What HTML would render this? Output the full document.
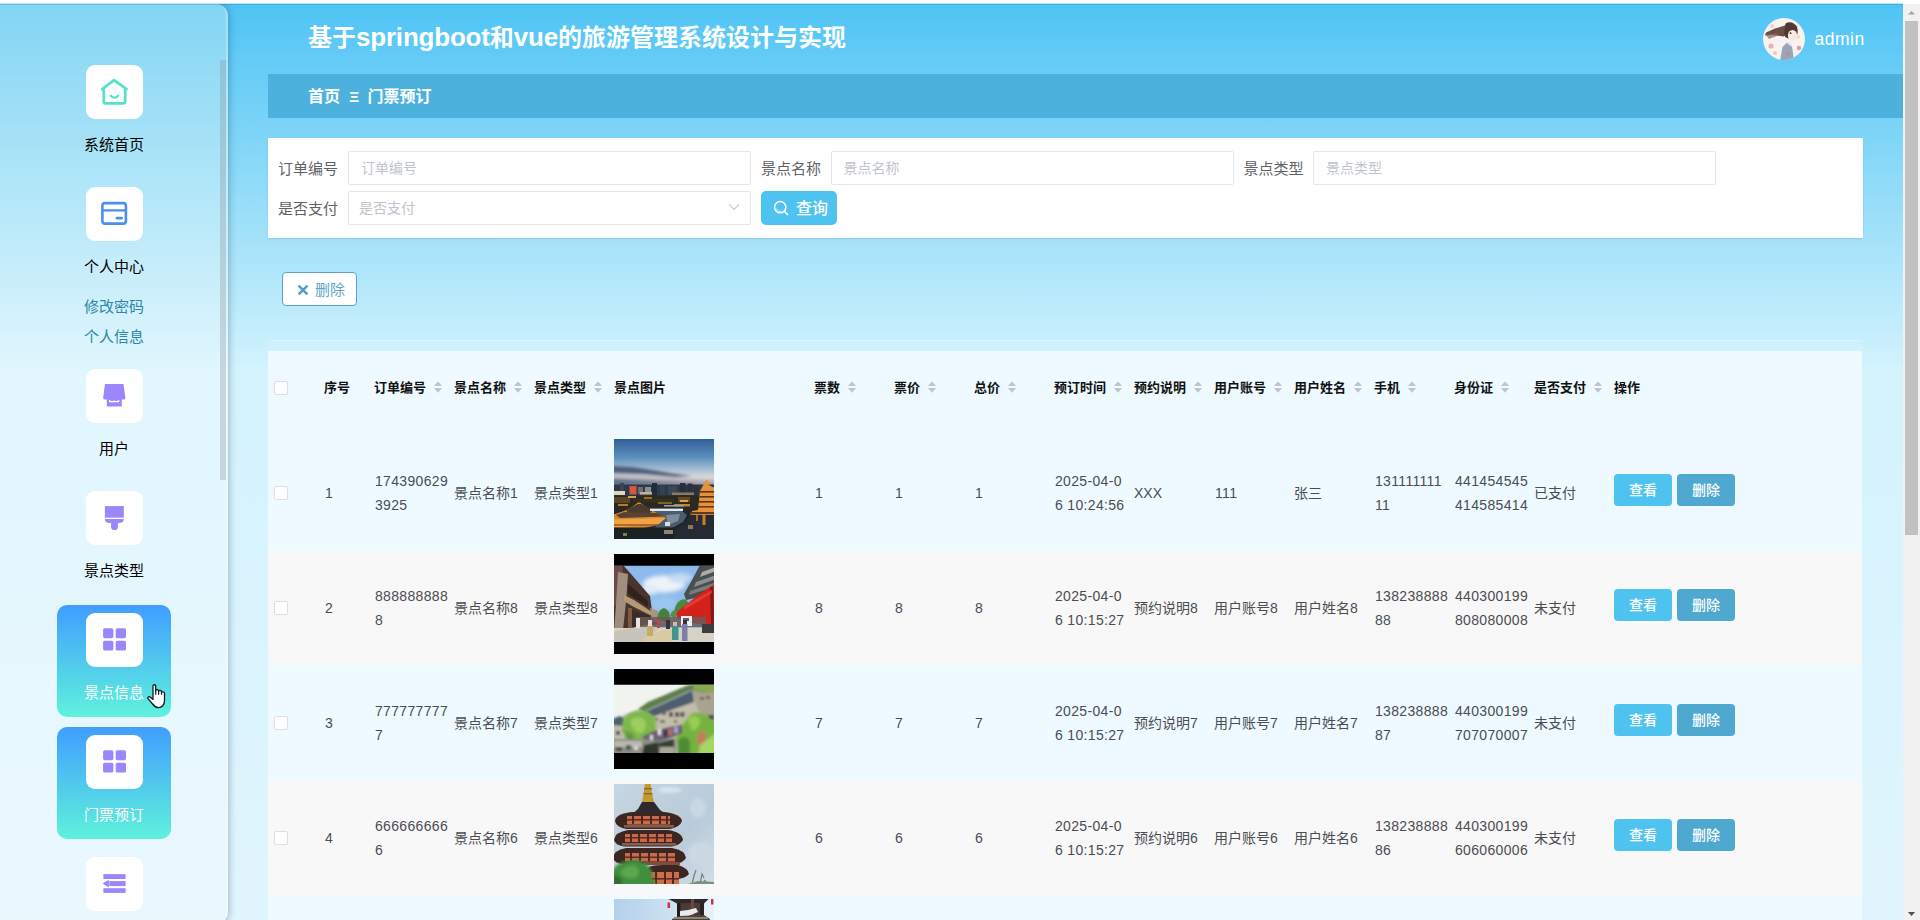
<!DOCTYPE html>
<html lang="zh-CN"><head><meta charset="utf-8"><title>基于springboot和vue的旅游管理系统设计与实现</title>
<style>
*{box-sizing:border-box;margin:0;padding:0}
button{border:0;font:inherit;color:inherit;background:none;cursor:pointer;padding:0;display:block;overflow:visible}
h1{font-size:inherit}
html,body{width:1920px;height:920px;overflow:hidden;background:#fff}
body{position:relative;font-family:"Liberation Sans", "Noto Sans CJK SC", sans-serif;font-size:14px;color:#333}
.abs{position:absolute}
#app{position:absolute;left:0;top:4px;width:1903px;height:920px;overflow:hidden;
 background:linear-gradient(180deg,#4FC4F5 0%,#d4f3fd 40%,#E1F5FE 100%)}
#topl{position:absolute;left:0;top:3px;width:1903px;height:1px;background:rgba(79,195,247,.4)}
#topd{position:absolute;left:0;top:4px;width:1903px;height:1px;background:rgba(30,90,130,.22)}
#side{position:absolute;left:0;top:0;width:228px;height:920px;border-radius:0 12px 12px 0;
 background:linear-gradient(180deg,rgba(250,255,240,.3) 0%,rgba(255,255,255,.3) 40%);box-shadow:0 0 8px rgba(0,30,60,.36);border-right:2px solid rgba(255,255,255,.25)}
#sthumb{position:absolute;left:220px;top:56px;width:6px;height:420px;background:rgba(144,147,153,.32);border-radius:1px}
.mi{position:absolute;left:57px;width:114px;height:112px;border-radius:10px;text-align:center}
.mi.on{background:linear-gradient(180deg,#409EFF 0%,#5ff2dc 100%)}
.mi .ib{position:absolute;left:29px;top:8px;width:56.5px;height:54px;border-radius:9px;background:#fff;overflow:hidden}
.mi .ib svg{position:absolute;left:0;top:0}
.mi .lb{position:absolute;left:0;top:62px;width:114px;height:50px;line-height:52px;font-size:15px;color:#000;white-space:nowrap}
.mi.on .lb{color:#fff}
.sub{position:absolute;left:57px;width:114px;height:30px;line-height:32px;text-align:center;font-size:15px;color:#2d87a8}
#title{position:absolute;left:308px;top:0;height:70px;line-height:66px;font-size:24px;font-weight:bold;color:#fff;white-space:nowrap}
#title .lt{font-size:26px;letter-spacing:-.2px}
#user{position:absolute;left:1814.5px;top:0;height:70px;line-height:71px;font-size:17.5px;letter-spacing:.5px;color:#fff}
#avatar{position:absolute;left:1763px;top:14px;width:42px;height:42px;border-radius:50%;overflow:hidden}
#crumb{position:absolute;left:268px;top:70px;width:1635px;height:44px;background:#4cb2dd}
#crumb span{position:absolute;top:1px;height:44px;line-height:44px;font-size:16px;font-weight:bold;color:#fff;white-space:nowrap}
#search{position:absolute;left:268px;top:134px;width:1595px;height:100px;background:#fff;box-shadow:0 1px 2px rgba(0,60,100,.12)}
.fl{position:absolute;height:34px;line-height:36px;font-size:15px;color:#606266;white-space:nowrap}
.inp{position:absolute;width:403px;height:34px;border:1px solid #e5e6e9;border-radius:1.5px;background:#fff;line-height:32px;font-size:14px;color:#c0c4cc;white-space:nowrap}
.btnq{position:absolute;left:493px;top:53px;width:76px;height:34px;border-radius:5px;background:#4fc3f0;color:#fff;font-size:16px;line-height:36px;font-weight:500;white-space:nowrap}
.btnd{position:absolute;left:282px;top:268px;width:75px;height:34px;border-radius:4px;background:#fff;border:1px solid #5ba3c4;color:#5fa5c6;font-size:15px;line-height:32px;white-space:nowrap}
#tline{position:absolute;left:270px;top:336px;width:1592px;height:1px;background:rgba(255,255,255,.32)}
#tband{position:absolute;left:268px;top:337px;width:1594px;height:10px;background:rgba(255,255,255,.1)}
#tbl{position:absolute;left:268px;top:347px;width:1594px;height:600px}
.tr{position:absolute;left:0;width:1594px}
.th{position:absolute;top:0;height:74px;line-height:74px;font-size:13px;font-weight:bold;color:#111;white-space:nowrap}
.td{position:absolute;font-size:14px;line-height:24px;color:#4b4d52;white-space:nowrap}
.td.n{letter-spacing:.33px;margin-left:1px}
.cb{position:absolute;left:6px;width:14px;height:14px;border:1px solid #dcdfe6;border-radius:2px;background:#fff}
.caret{position:absolute;width:10px;height:14px}
.caret i{position:absolute;left:0;width:0;height:0;border:4.2px solid transparent}
.caret i.u{top:-3.8px;border-bottom-color:#c0c4cc}
.caret i.d{top:7.1px;border-top-color:#c0c4cc}
.ob{position:absolute;width:58px;height:32px;border-radius:4px;color:#fff;font-size:14px;line-height:32px;text-align:center;font-weight:500}
.thumb{position:absolute;left:346px;top:4px;width:100px;height:100px;overflow:hidden}
#sb{position:absolute;left:1903px;top:4px;width:17px;height:916px;background:#f1f1f1}
#sb .t{position:absolute;left:2px;top:17px;width:13px;height:514px;background:#c1c1c1}
</style></head>
<body>
<div id="app">
<aside id="side">
<div id="sthumb"></div>
<nav>
<div class="mi" style="top:53px"><div class="ib"><svg width="57" height="54" viewBox="0 0 57 54" ><path d="M16.1 24.1 L28.1 15.1 L40.5 24.1 M17.7 23.4 V36.2 Q17.7 38.4 19.9 38.4 H37 Q39.2 38.4 39.2 36.2 V23.4" fill="none" stroke="#52e3c8" stroke-width="2.7" stroke-linecap="round" stroke-linejoin="round"/><path d="M24.8 30.7 Q28.45 34.6 32.1 30.7" fill="none" stroke="#52e3c8" stroke-width="2.3" stroke-linecap="round"/></svg></div><div class="lb">系统首页</div></div>
<div class="mi" style="top:175px"><div class="ib"><svg width="57" height="54" viewBox="0 0 57 54" ><rect x="16.4" y="16.1" width="23.5" height="20.5" rx="2.6" fill="none" stroke="#4a90f0" stroke-width="2.6"/><path d="M16.4 23.3 H39.9" stroke="#4a90f0" stroke-width="2.2"/><path d="M30.9 31.1 H35.7" stroke="#4a90f0" stroke-width="2.8" stroke-linecap="round"/></svg></div><div class="lb">个人中心</div></div>
<div class="sub" style="top:287px">修改密码</div>
<div class="sub" style="top:317px">个人信息</div>
<div class="mi" style="top:357px"><div class="ib"><svg width="57" height="54" viewBox="0 0 57 54" ><path d="M18.9 15.1 H37.5 L39.4 29 Q39.4 30.6 37.6 30.6 H35.8 V37.5 H20.8 V30.6 H19 Q17.2 30.6 17.2 29 Z" fill="#9b87fb"/><path d="M23 30.7 Q25.6 32.6 28.2 31.6 Q30.8 32.6 33.4 30.7 L33.2 33.2 H23.2 Z" fill="#fff"/></svg></div><div class="lb">用户</div></div>
<div class="mi" style="top:479px"><div class="ib"><svg width="57" height="54" viewBox="0 0 57 54" ><rect x="18.9" y="15.1" width="18.9" height="11.6" fill="#9b87fb"/><path d="M18.9 28.1 H37.8 Q37.8 31.9 34 31.9 H31.9 V35.7 Q31.9 39.1 28.5 39.1 Q25.1 39.1 25.1 35.7 V31.9 H22.7 Q18.9 31.9 18.9 28.1 Z" fill="#9b87fb"/></svg></div><div class="lb">景点类型</div></div>
<div class="mi on" style="top:601px"><div class="ib"><svg width="57" height="54" viewBox="0 0 57 54" ><rect x="17.1" y="15.3" width="10.3" height="9.9" rx="1.6" fill="#9b87fb"/><rect x="17.1" y="27.7" width="10.3" height="9.9" rx="1.6" fill="#9b87fb"/><rect x="29.7" y="15.3" width="10.3" height="9.9" rx="1.6" fill="#9b87fb"/><rect x="29.7" y="27.7" width="10.3" height="9.9" rx="1.6" fill="#9b87fb"/></svg></div><div class="lb">景点信息</div></div>
<div class="mi on" style="top:723px"><div class="ib"><svg width="57" height="54" viewBox="0 0 57 54" ><rect x="17.1" y="15.3" width="10.3" height="9.9" rx="1.6" fill="#9b87fb"/><rect x="17.1" y="27.7" width="10.3" height="9.9" rx="1.6" fill="#9b87fb"/><rect x="29.7" y="15.3" width="10.3" height="9.9" rx="1.6" fill="#9b87fb"/><rect x="29.7" y="27.7" width="10.3" height="9.9" rx="1.6" fill="#9b87fb"/></svg></div><div class="lb">门票预订</div></div>
<div class="mi" style="top:845px"><div class="ib"><svg width="57" height="54" viewBox="0 0 57 54" ><rect x="17.4" y="17.1" width="22.2" height="4.9" fill="#9b87fb"/><rect x="23.3" y="24.1" width="16.3" height="5" fill="#9b87fb"/><path d="M16.6 26.6 L22.8 22.7 V30.5 Z" fill="#9b87fb"/><rect x="17.4" y="31.2" width="22.2" height="4.7" fill="#9b87fb"/></svg></div><div class="lb">系统管理</div></div>
</nav>
</aside>
<header>
<h1 id="title">基于<span class="lt">springboot</span>和<span class="lt">vue</span>的旅游管理系统设计与实现</h1>
<div id="avatar"><svg width="42" height="42" viewBox="0 0 42 42" ><defs><filter id="bav" x="-10%" y="-10%" width="120%" height="120%"><feGaussianBlur stdDeviation=".6"/></filter></defs><rect width="42" height="42" fill="#f8f2f1"/><g filter="url(#bav)"><circle cx="8" cy="28" r="2.6" fill="#eeb3aa"/><circle cx="12" cy="35" r="2" fill="#f0c4c0"/><circle cx="36" cy="30" r="2.2" fill="#ea9a92"/><circle cx="35" cy="19" r="2" fill="#f3dfb0"/><circle cx="9" cy="8" r="2" fill="#f3d3d0"/><circle cx="33" cy="8" r="1.6" fill="#f0c0c0"/><path d="M23 5 Q30 2.5 34 9 Q36 15 32.5 19.5 L25 20.5 Q19.5 18.5 20 12 Z" fill="#4f3934"/><path d="M22 7.5 L12 10.5 L3 14.5 L2 17.5 L10 17 L21 18.5 Z" fill="#6a4f48"/><path d="M3 17 L14 15 L14 18 L6 21 Z" fill="#8a6a62" opacity=".7"/><ellipse cx="29.5" cy="17.5" rx="4.6" ry="5.6" fill="#f7e9e2"/><circle cx="27.6" cy="15.2" r=".9" fill="#3a2a2a"/><path d="M17 43 L19.5 29 L24 24.5 L29 28 L31 43 Z" fill="#98a6bc"/><path d="M24 25 L28 24 L29 29 Z" fill="#f3e4dc"/><circle cx="24.5" cy="36" r="1.8" fill="#df7f7c"/></g></svg></div><div id="user">admin</div>
</header>
<nav id="crumb"><span style="left:40px">首页</span><span style="left:81.3px;top:.5px;font-size:15.5px">Ξ</span><span style="left:99.6px">门票预订</span></nav>
<main>
<form id="search">
<div class="fl" style="left:10px;top:13px">订单编号</div><div class="inp" style="left:80px;top:13px"><span style="margin-left:12px">订单编号</span></div>
<div class="fl" style="left:493px;top:13px">景点名称</div><div class="inp" style="left:562.5px;top:13px"><span style="margin-left:12px">景点名称</span></div>
<div class="fl" style="left:975.5px;top:13px">景点类型</div><div class="inp" style="left:1045px;top:13px"><span style="margin-left:12px">景点类型</span></div>
<div class="fl" style="left:10px;top:53px">是否支付</div><div class="inp" style="left:80px;top:53px"><span style="margin-left:10px">是否支付</span><svg width="14" height="14" viewBox="0 0 14 14" style="position:absolute;left:377.6px;top:7.5px"><path d="M2.2 4.6 L7 9.4 L11.8 4.6" fill="none" stroke="#c6c9d0" stroke-width="1.15" stroke-linecap="round" stroke-linejoin="round"/></svg></div>
<button type="button" class="btnq"><svg width="16" height="16" viewBox="0 0 16 16" style="position:absolute;left:12px;top:9px"><circle cx="7.2" cy="7.2" r="5.6" fill="none" stroke="#fff" stroke-width="1.5"/><path d="M11.3 11.3 L14.6 14.6" stroke="#fff" stroke-width="1.5" stroke-linecap="round"/><path d="M3.6 8.6 A4 4 0 0 0 8.6 11" fill="none" stroke="#fff" stroke-width="1" opacity=".7"/></svg><span style="position:absolute;left:35px;top:0">查询</span></button>
</form>
<button type="button" class="btnd"><svg width="12" height="12" viewBox="0 0 12 12" style="position:absolute;left:14px;top:11px"><path d="M1.6 1.6 L10.4 10.4 M10.4 1.6 L1.6 10.4" stroke="#4f9fc8" stroke-width="2.5" stroke-linecap="butt"/></svg><span style="position:absolute;left:32px;top:1px">删除</span></button>
<div id="tline"></div><div id="tband"></div>
<div id="tbl" role="table">
<div class="tr" role="row" style="top:0;height:84px;background:#eefaff"><span class="cb" style="top:30px"></span><span class="th" role="columnheader" style="left:56px">序号</span><span class="th" role="columnheader" style="left:106px">订单编号</span><svg width="10" height="14" viewBox="0 0 10 14" style="position:absolute;left:164.8px;top:29px"><path d="M5 1.4 L0.85 6 H9.15 Z M0.85 8.1 H9.15 L5 12.8 Z" fill="#c0c4cc"/></svg><span class="th" role="columnheader" style="left:186px">景点名称</span><svg width="10" height="14" viewBox="0 0 10 14" style="position:absolute;left:244.8px;top:29px"><path d="M5 1.4 L0.85 6 H9.15 Z M0.85 8.1 H9.15 L5 12.8 Z" fill="#c0c4cc"/></svg><span class="th" role="columnheader" style="left:266px">景点类型</span><svg width="10" height="14" viewBox="0 0 10 14" style="position:absolute;left:324.8px;top:29px"><path d="M5 1.4 L0.85 6 H9.15 Z M0.85 8.1 H9.15 L5 12.8 Z" fill="#c0c4cc"/></svg><span class="th" role="columnheader" style="left:346px">景点图片</span><span class="th" role="columnheader" style="left:546px">票数</span><svg width="10" height="14" viewBox="0 0 10 14" style="position:absolute;left:578.8px;top:29px"><path d="M5 1.4 L0.85 6 H9.15 Z M0.85 8.1 H9.15 L5 12.8 Z" fill="#c0c4cc"/></svg><span class="th" role="columnheader" style="left:626px">票价</span><svg width="10" height="14" viewBox="0 0 10 14" style="position:absolute;left:658.8px;top:29px"><path d="M5 1.4 L0.85 6 H9.15 Z M0.85 8.1 H9.15 L5 12.8 Z" fill="#c0c4cc"/></svg><span class="th" role="columnheader" style="left:706px">总价</span><svg width="10" height="14" viewBox="0 0 10 14" style="position:absolute;left:738.8px;top:29px"><path d="M5 1.4 L0.85 6 H9.15 Z M0.85 8.1 H9.15 L5 12.8 Z" fill="#c0c4cc"/></svg><span class="th" role="columnheader" style="left:786px">预订时间</span><svg width="10" height="14" viewBox="0 0 10 14" style="position:absolute;left:844.8px;top:29px"><path d="M5 1.4 L0.85 6 H9.15 Z M0.85 8.1 H9.15 L5 12.8 Z" fill="#c0c4cc"/></svg><span class="th" role="columnheader" style="left:866px">预约说明</span><svg width="10" height="14" viewBox="0 0 10 14" style="position:absolute;left:924.8px;top:29px"><path d="M5 1.4 L0.85 6 H9.15 Z M0.85 8.1 H9.15 L5 12.8 Z" fill="#c0c4cc"/></svg><span class="th" role="columnheader" style="left:946px">用户账号</span><svg width="10" height="14" viewBox="0 0 10 14" style="position:absolute;left:1004.8px;top:29px"><path d="M5 1.4 L0.85 6 H9.15 Z M0.85 8.1 H9.15 L5 12.8 Z" fill="#c0c4cc"/></svg><span class="th" role="columnheader" style="left:1026px">用户姓名</span><svg width="10" height="14" viewBox="0 0 10 14" style="position:absolute;left:1084.8px;top:29px"><path d="M5 1.4 L0.85 6 H9.15 Z M0.85 8.1 H9.15 L5 12.8 Z" fill="#c0c4cc"/></svg><span class="th" role="columnheader" style="left:1106px">手机</span><svg width="10" height="14" viewBox="0 0 10 14" style="position:absolute;left:1138.8px;top:29px"><path d="M5 1.4 L0.85 6 H9.15 Z M0.85 8.1 H9.15 L5 12.8 Z" fill="#c0c4cc"/></svg><span class="th" role="columnheader" style="left:1186px">身份证</span><svg width="10" height="14" viewBox="0 0 10 14" style="position:absolute;left:1231.8px;top:29px"><path d="M5 1.4 L0.85 6 H9.15 Z M0.85 8.1 H9.15 L5 12.8 Z" fill="#c0c4cc"/></svg><span class="th" role="columnheader" style="left:1266px">是否支付</span><svg width="10" height="14" viewBox="0 0 10 14" style="position:absolute;left:1324.8px;top:29px"><path d="M5 1.4 L0.85 6 H9.15 Z M0.85 8.1 H9.15 L5 12.8 Z" fill="#c0c4cc"/></svg><span class="th" role="columnheader" style="left:1346px">操作</span></div>
<div class="tr" role="row" style="top:84px;height:115px;background:#eefaff"><span class="cb" style="top:51px"></span><span class="td n" role="cell" style="left:56px;top:45.7px">1</span><span class="td n" role="cell" style="left:106px;top:33.7px">174390629<br>3925</span><span class="td" role="cell" style="left:186px;top:46.2px">景点名称1</span><span class="td" role="cell" style="left:266px;top:46.2px">景点类型1</span><span class="thumb"><svg width="100" height="100" viewBox="0 0 100 100" style="display:block"><defs><linearGradient id="s1" x1="0" y1="0" x2="0" y2="1"><stop offset="0" stop-color="#2f6097"/><stop offset=".4" stop-color="#5f8fbe"/><stop offset=".62" stop-color="#9fb9d0"/><stop offset=".82" stop-color="#dcdadd"/><stop offset="1" stop-color="#ead9d2"/></linearGradient>
<linearGradient id="s1b" x1="0" y1="0" x2="1" y2="0"><stop offset="0" stop-color="#5b6c88"/><stop offset="1" stop-color="#a9a4ac"/></linearGradient><filter id="b1" x="-10%" y="-10%" width="120%" height="120%"><feGaussianBlur stdDeviation=".7"/></filter><filter id="b1s" x="-10%" y="-10%" width="120%" height="120%"><feGaussianBlur stdDeviation="1.6"/></filter></defs>
<rect width="100" height="100" fill="#20262a"/><rect width="100" height="47" fill="url(#s1)"/>
<g filter="url(#b1s)"><path d="M-2 27 L18 28 L38 31 L58 34.5 L78 37 L60 38 L30 35 L-2 34 Z" fill="#4c5d7b"/><path d="M-2 34 L30 35.5 L70 38.5 L102 40 V43 L-2 41 Z" fill="#b9b4ba" opacity=".75"/><path d="M-2 39.5 L50 41.5 L102 43 V48 H-2 Z" fill="url(#s1b)"/></g>
<g filter="url(#b1)">
<rect x="-2" y="45.5" width="104" height="13" fill="#2d3848"/>
<rect x="6" y="44" width="4" height="8" fill="#3a4558"/><rect x="38" y="44" width="5" height="13" fill="#232c3a"/><rect x="66" y="44" width="5.5" height="13" fill="#252e3b"/><rect x="73.5" y="44.5" width="5" height="12" fill="#28313e"/><rect x="79.5" y="46" width="4.5" height="11" fill="#2a3340"/><rect x="46" y="46.5" width="5" height="9" fill="#344052"/><rect x="54" y="47" width="9" height="9" fill="#3a4657"/>
<rect x="15.5" y="47" width="7" height="8.5" fill="#d8573c"/><rect x="24" y="48" width="5" height="7" fill="#6a6e7a"/><rect x="31" y="48" width="6" height="7" fill="#8b8f98"/>
<rect x="-2" y="52" width="13" height="4" fill="#e3d4bc"/><rect x="26" y="53" width="12" height="2.6" fill="#c7b089"/><rect x="58" y="53.5" width="22" height="2.5" fill="#8b7a62"/>
<rect x="-2" y="56.5" width="104" height="14" fill="#2a2920"/>
<rect x="0" y="58" width="16" height="6" fill="#5a4422"/><rect x="64" y="58" width="12" height="5" fill="#6a4a20"/><rect x="20" y="60" width="40" height="3" fill="#33301f"/><rect x="4" y="65" width="10" height="2" fill="#b9782c"/><rect x="30" y="58" width="8" height="2" fill="#9a6a2a"/><rect x="44" y="63" width="14" height="2" fill="#8a5e26"/><rect x="60" y="65" width="16" height="2.4" fill="#c4832e"/><rect x="66" y="61" width="8" height="2" fill="#d9a24a"/><rect x="14" y="57" width="8" height="2" fill="#caa25a"/>
<path d="M92 41 L93.5 41 L95 46 L98.5 48 L101 48 V77 H76 L78 72 L84 71 L85 62 L86 52 L88.5 47.5 Z" fill="#e5923a"/>
<rect x="86" y="52" width="15" height="1.6" fill="#5a3418"/><rect x="85.5" y="57" width="16" height="1.6" fill="#5a3418"/><rect x="85" y="62" width="16" height="1.6" fill="#5a3418"/><rect x="84" y="67" width="17" height="1.6" fill="#6a3c1a"/><rect x="76" y="73" width="25" height="2.2" fill="#5b3a20"/>
<path d="M-2 76 L10 72 L18 68 L24 63.5 L26 63.5 L32 68 L42 73 L50 76 L53 79 L50 85 L30 89 L-2 89 Z" fill="#d9872f"/>
<path d="M12 71 L24 65 L27 65 L40 71 L36 74 L14 74 Z" fill="#4c3a2c"/><path d="M2 76 L10 73 L44 74 L50 77.5 L6 79 Z" fill="#5a4330"/>
<path d="M-2 80.5 L52 79 L49 85.5 L-2 88.5 Z" fill="#f2a445"/><path d="M0 85 H46 V87 H0 Z" fill="#7a4a20" opacity=".6"/>
<path d="M40 72 H68 L73 76 L69 83 L58 89 L40 89 L46 84 L52 79 Z" fill="#4d5b6c"/><path d="M52 76 L66 75 L64 82 L54 86 Z" fill="#7b8b9d"/><rect x="36" y="69.6" width="33" height="2.4" fill="#dfe9f3"/><rect x="50" y="66" width="20" height="1.6" fill="#8fa0b4"/>
<path d="M76 76 H102 V102 H60 L62 90 L72 84 Z" fill="#262c30"/><rect x="88.5" y="76" width="3" height="10" fill="#c9802f"/><rect x="82" y="76" width="2" height="6" fill="#a66a2a"/>
<rect x="-2" y="88.5" width="62" height="14" fill="#1d2324"/><rect x="51" y="83" width="5" height="4" fill="#d7dde0"/><rect x="50" y="91" width="9" height="4" fill="#8a8470"/><rect x="9" y="94" width="4" height="3" fill="#6f8a3e"/><rect x="74" y="86" width="5" height="4" fill="#8a7a52"/>
</g></svg></span><span class="td n" role="cell" style="left:546px;top:45.7px">1</span><span class="td n" role="cell" style="left:626px;top:45.7px">1</span><span class="td n" role="cell" style="left:706px;top:45.7px">1</span><span class="td n" role="cell" style="left:786px;top:33.7px">2025-04-0<br>6 10:24:56</span><span class="td" role="cell" style="left:866px;top:46.2px">XXX</span><span class="td n" role="cell" style="left:946px;top:45.7px">111</span><span class="td" role="cell" style="left:1026px;top:46.2px">张三</span><span class="td n" role="cell" style="left:1106px;top:33.7px">131111111<br>11</span><span class="td n" role="cell" style="left:1186px;top:33.7px">441454545<br>414585414</span><span class="td" role="cell" style="left:1266px;top:46.2px">已支付</span><button type="button" class="ob" style="left:1346px;top:39px;background:#4fc3f0">查看</button><button type="button" class="ob" style="left:1409px;top:39px;background:#4ea8cf">删除</button></div>
<div class="tr" role="row" style="top:199px;height:115px;background:#f8f8f8"><span class="cb" style="top:51px"></span><span class="td n" role="cell" style="left:56px;top:45.7px">2</span><span class="td n" role="cell" style="left:106px;top:33.7px">888888888<br>8</span><span class="td" role="cell" style="left:186px;top:46.2px">景点名称8</span><span class="td" role="cell" style="left:266px;top:46.2px">景点类型8</span><span class="thumb"><svg width="100" height="100" viewBox="0 0 100 100" style="display:block"><defs><filter id="b2" x="-10%" y="-10%" width="120%" height="120%"><feGaussianBlur stdDeviation=".7"/></filter><filter id="b2s" x="-10%" y="-10%" width="120%" height="120%"><feGaussianBlur stdDeviation="2.2"/></filter><clipPath id="c2"><rect x="0" y="11.7" width="100" height="76.4"/></clipPath></defs>
<rect width="100" height="100" fill="#000"/>
<g clip-path="url(#c2)"><rect x="0" y="11" width="100" height="78" fill="#8dbaec"/>
<g filter="url(#b2s)"><ellipse cx="50" cy="30" rx="21" ry="8.5" fill="#eef3f9"/><ellipse cx="36" cy="36" rx="9" ry="5" fill="#dfeaf6"/><ellipse cx="66" cy="24" rx="12" ry="5" fill="#c4dcf4"/><ellipse cx="50" cy="50" rx="14" ry="7" fill="#9cc6f0"/></g>
<g filter="url(#b2)">
<path d="M-2 11 H9 L17 20 L36 42 L38 57 L44 60 L45 70 L-2 80 Z" fill="#4a362e"/>
<path d="M-2 11 H8 L9 18 L8 50 L-2 52 Z" fill="#6d4a48"/><path d="M4 18 L14 20 L12 48 L9 76 L0 78 L2 50 Z" fill="#a08f7e"/>
<path d="M10 41 L20 46 L38 58 L38 62 L18 52 L10 47 Z" fill="#b39a72"/><path d="M14 30 L34 47 L34 53 L14 40 Z" fill="#33241f"/><rect x="14" y="54" width="4" height="20" fill="#7d5a40"/><path d="M18 56 L36 62 L36 72 L18 74 Z" fill="#3a2b26"/>
<path d="M36 54 L44 57 L44 68 L38 68 Z" fill="#a8957e"/>
<path d="M86 11 H102 V40 L72 46 L70 40 L78 26 Z" fill="#4b4f4f"/><path d="M88 18 L102 13 V17 L86 23 Z" fill="#a8acac"/><path d="M82 28 L102 21 V25 L80 33 Z" fill="#8a8f90"/><path d="M76 37 L100 29 V33 L75 41 Z" fill="#777c7c"/>
<path d="M60 58 Q62 46 70 45 Q76 47 74 54 L70 60 Z" fill="#4c8a3c"/><path d="M43 66 Q44 55 50 54 Q56 56 56 64 L54 68 Z" fill="#46803a"/><path d="M56 62 Q58 55 62 56 L62 64 Z" fill="#5a8f48"/>
<path d="M102 29 L96 33 L86 40 L70 52 L62 59 L63 64 L70 67 L84 70 L102 71 Z" fill="#d3221d"/><path d="M96 33 L99 33 L100 70 L97 70 Z" fill="#7a1c1a"/><path d="M70 52 L98 36 L98 39 L70 56 Z" fill="#e8453a" opacity=".7"/>
<rect x="-2" y="74" width="104" height="16" fill="#d8d2c6"/><path d="M-2 78 L36 70 L46 72 L30 90 L-2 90 Z" fill="#c9c4ba"/><path d="M30 84 L48 76 L62 76 L58 90 L26 90 Z" fill="#d9c9a4"/>
<rect x="22" y="63" width="70" height="10" fill="#6b5a58" opacity=".85"/><rect x="67" y="62" width="11" height="10" fill="#f2eeee"/><rect x="69" y="64" width="6" height="3" fill="#59606a"/>
<rect x="22" y="64" width="4" height="10" fill="#e9e4df"/><rect x="34" y="66" width="4" height="7" fill="#e8e2de"/><rect x="43" y="66" width="3" height="8" fill="#b84a48"/><rect x="52" y="66" width="4" height="9" fill="#3a3230"/><rect x="88" y="70" width="12" height="9" fill="#3c3a3c"/>
<rect x="33" y="72" width="6" height="10" fill="#c8a968"/><rect x="58" y="72" width="6.5" height="14" fill="#3f9488"/><rect x="68" y="70" width="5.5" height="17" fill="#7f7ea6"/><rect x="59" y="68" width="4" height="4" fill="#d9b9a0"/><rect x="69" y="66" width="4" height="4" fill="#40302c"/>
</g></g></svg></span><span class="td n" role="cell" style="left:546px;top:45.7px">8</span><span class="td n" role="cell" style="left:626px;top:45.7px">8</span><span class="td n" role="cell" style="left:706px;top:45.7px">8</span><span class="td n" role="cell" style="left:786px;top:33.7px">2025-04-0<br>6 10:15:27</span><span class="td" role="cell" style="left:866px;top:46.2px">预约说明8</span><span class="td" role="cell" style="left:946px;top:46.2px">用户账号8</span><span class="td" role="cell" style="left:1026px;top:46.2px">用户姓名8</span><span class="td n" role="cell" style="left:1106px;top:33.7px">138238888<br>88</span><span class="td n" role="cell" style="left:1186px;top:33.7px">440300199<br>808080008</span><span class="td" role="cell" style="left:1266px;top:46.2px">未支付</span><button type="button" class="ob" style="left:1346px;top:39px;background:#4fc3f0">查看</button><button type="button" class="ob" style="left:1409px;top:39px;background:#4ea8cf">删除</button></div>
<div class="tr" role="row" style="top:314px;height:115px;background:#eefaff"><span class="cb" style="top:51px"></span><span class="td n" role="cell" style="left:56px;top:45.7px">3</span><span class="td n" role="cell" style="left:106px;top:33.7px">777777777<br>7</span><span class="td" role="cell" style="left:186px;top:46.2px">景点名称7</span><span class="td" role="cell" style="left:266px;top:46.2px">景点类型7</span><span class="thumb"><svg width="100" height="100" viewBox="0 0 100 100" style="display:block"><defs><filter id="b3" x="-10%" y="-10%" width="120%" height="120%"><feGaussianBlur stdDeviation=".8"/></filter><filter id="b3s" x="-10%" y="-10%" width="120%" height="120%"><feGaussianBlur stdDeviation="1.8"/></filter><clipPath id="c3"><rect x="0" y="15.8" width="100" height="68.2"/></clipPath></defs>
<rect width="100" height="100" fill="#000"/>
<g clip-path="url(#c3)"><rect x="0" y="15" width="100" height="70" fill="#f1f3ee"/>
<g filter="url(#b3)">
<path d="M-2 52 L10 46 L28 40 L44 32 L78 17 L102 14 V86 H-2 Z" fill="#c2bcab"/>
<path d="M78 20 L102 18 V56 L90 52 L82 36 Z" fill="#a9a391"/>
<path d="M24 40 L34 33 L46 28 L60 22 L72 17 L80 15 L102 14 V22 L90 24 L78 21 L64 28 L30 43 Z" fill="#5f7f4c"/><path d="M78 14 H102 V23 L92 24 L80 21 Z" fill="#87a84e"/>
<path d="M30 43 L50 34 L70 25 L78 20 L80 33 L60 40 L38 48 Z" fill="#4f5d6e"/><path d="M32 42 L78 21" stroke="#c7d0d6" stroke-width=".8" fill="none"/>
<rect x="48" y="42" width="4" height="4" fill="#6a675c"/><rect x="55" y="43" width="4" height="5" fill="#5f5c52"/><rect x="61" y="43" width="4" height="5" fill="#5f5c52"/><rect x="66" y="43" width="4.5" height="5" fill="#666257"/><rect x="40" y="49" width="4" height="3" fill="#7d796c"/><rect x="46" y="51" width="5" height="3" fill="#7d796c"/><rect x="60" y="51" width="3" height="3" fill="#7d796c"/><rect x="86" y="28" width="4" height="3" fill="#6f6a5e"/><rect x="92" y="27" width="4" height="3" fill="#726d60"/><rect x="94" y="46" width="6" height="5" fill="#4a4a44"/>
<path d="M-2 50 L6 47 L11 50 L10 57 L-2 56 Z" fill="#4c6470"/><rect x="2" y="62" width="4" height="4" fill="#55544c"/><rect x="9" y="60" width="3" height="3" fill="#66645a"/>
</g>
<g filter="url(#b3s)">
<path d="M8 56 Q10 44 22 42 Q34 40 40 48 Q44 58 40 66 Q34 76 22 76 Q10 72 8 56 Z" fill="#7db84c"/><path d="M16 52 Q22 46 30 50 Q34 58 28 64 Q20 66 16 52 Z" fill="#9ccf5e"/><path d="M10 64 Q14 60 20 66 Q22 74 14 74 Z" fill="#5f9a3e"/>
<path d="M62 70 Q64 58 72 52 Q76 42 86 44 Q98 48 102 56 V86 H64 Z" fill="#76b240"/><path d="M74 50 Q80 44 86 50 Q86 60 78 62 Z" fill="#98cd58"/><path d="M64 72 Q70 64 76 72 L76 86 H64 Z" fill="#4f8a34"/>
<path d="M84 63 L92 63 L92 74 L83 76 Z" fill="#c47a5e"/><path d="M86 76 L102 64 V86 H84 Z" fill="#a6d664"/>
</g>
<g filter="url(#b3)">
<path d="M28 68 L40 62 L56 58 L68 56 L68 64 L54 70 L34 76 Z" fill="#6a6474"/><rect x="44" y="60" width="3" height="6" fill="#e6e4e8"/><rect x="50" y="61" width="3" height="7" fill="#332e38"/><rect x="55" y="60" width="3" height="6" fill="#c86a58"/><rect x="60" y="58" width="4" height="6" fill="#a9a2d0"/><rect x="36" y="66" width="3" height="6" fill="#d9d6da"/>
<path d="M-2 70 L30 70 L44 72 L62 70 L62 86 H-2 Z" fill="#8f8e84"/><path d="M30 76 L44 73 L45 86 H28 Z" fill="#2f372c"/><path d="M44 74 L60 70 L60 80 L46 82 Z" fill="#384034"/><rect x="0" y="72" width="28" height="6" fill="#b9b8b2"/><rect x="2" y="78" width="6" height="4" fill="#4a4a48"/><rect x="12" y="76" width="5" height="5" fill="#59585a"/><rect x="20" y="77" width="4" height="4" fill="#d8d6d8"/><rect x="46" y="78" width="14" height="8" fill="#a9a898"/>
</g></g></svg></span><span class="td n" role="cell" style="left:546px;top:45.7px">7</span><span class="td n" role="cell" style="left:626px;top:45.7px">7</span><span class="td n" role="cell" style="left:706px;top:45.7px">7</span><span class="td n" role="cell" style="left:786px;top:33.7px">2025-04-0<br>6 10:15:27</span><span class="td" role="cell" style="left:866px;top:46.2px">预约说明7</span><span class="td" role="cell" style="left:946px;top:46.2px">用户账号7</span><span class="td" role="cell" style="left:1026px;top:46.2px">用户姓名7</span><span class="td n" role="cell" style="left:1106px;top:33.7px">138238888<br>87</span><span class="td n" role="cell" style="left:1186px;top:33.7px">440300199<br>707070007</span><span class="td" role="cell" style="left:1266px;top:46.2px">未支付</span><button type="button" class="ob" style="left:1346px;top:39px;background:#4fc3f0">查看</button><button type="button" class="ob" style="left:1409px;top:39px;background:#4ea8cf">删除</button></div>
<div class="tr" role="row" style="top:429px;height:115px;background:#f8f8f8"><span class="cb" style="top:51px"></span><span class="td n" role="cell" style="left:56px;top:45.7px">4</span><span class="td n" role="cell" style="left:106px;top:33.7px">666666666<br>6</span><span class="td" role="cell" style="left:186px;top:46.2px">景点名称6</span><span class="td" role="cell" style="left:266px;top:46.2px">景点类型6</span><span class="thumb"><svg width="100" height="100" viewBox="0 0 100 100" style="display:block"><defs><linearGradient id="s4" x1="0" y1="0" x2="1" y2="1"><stop offset="0" stop-color="#c6d6e2"/><stop offset=".6" stop-color="#b9cbd9"/><stop offset="1" stop-color="#d0dde6"/></linearGradient><filter id="b4" x="-10%" y="-10%" width="120%" height="120%"><feGaussianBlur stdDeviation=".7"/></filter><filter id="b4s" x="-10%" y="-10%" width="120%" height="120%"><feGaussianBlur stdDeviation="1.8"/></filter></defs>
<rect width="100" height="100" fill="url(#s4)"/>
<g filter="url(#b4s)"><ellipse cx="56" cy="6" rx="12" ry="3" fill="#d9e4ec"/><ellipse cx="84" cy="24" rx="8" ry="10" fill="#c9d8e3"/><ellipse cx="88" cy="70" rx="14" ry="12" fill="#cbd9e4"/></g>
<g filter="url(#b4)">
<path d="M31 -1 H36.5 L37.5 7 L39.5 16.5 L40 18 H28 L29.5 10 Z" fill="#c39a32"/><rect x="30" y="4" width="8" height="1.4" fill="#8a6a1e"/><rect x="29.5" y="9" width="9" height="1.4" fill="#8a6a1e"/>
<path d="M28 18 H40 L46 26 L50 28.5 H20 L24 25 Z" fill="#2e2a2e"/>
<path d="M1 37 Q2 29 20 28 H50 Q67 30 68 37 Q66 43 56 45 H12 Q2 43 1 37 Z" fill="#3a2622"/>
<rect x="13" y="32" width="43" height="8.5" fill="#c96b48"/><rect x="13" y="35" width="43" height="1.6" fill="#5a2e22"/><rect x="18" y="32" width="2" height="8" fill="#4a2a20"/><rect x="27" y="32" width="2" height="8" fill="#4a2a20"/><rect x="36" y="32" width="2" height="8" fill="#4a2a20"/><rect x="45" y="32" width="2" height="8" fill="#4a2a20"/><rect x="52" y="32" width="2" height="8" fill="#4a2a20"/>
<rect x="10" y="41" width="50" height="2.6" fill="#8a5a48"/>
<path d="M0 56 Q1 48 14 46 H54 Q68 48 69 56 Q66 61 58 62.5 H10 Q1 61 0 56 Z" fill="#3b2622"/>
<rect x="11" y="50" width="47" height="8" fill="#c9694a"/><rect x="11" y="53" width="47" height="1.5" fill="#5a2e22"/><rect x="16" y="50" width="2" height="8" fill="#4a2a20"/><rect x="24" y="50" width="2" height="8" fill="#4a2a20"/><rect x="33" y="50" width="2" height="8" fill="#4a2a20"/><rect x="42" y="50" width="2" height="8" fill="#4a2a20"/><rect x="50" y="50" width="2" height="8" fill="#4a2a20"/>
<rect x="8" y="59" width="54" height="2.6" fill="#8c5c4a"/>
<path d="M-1 74 Q0 66 12 64 H58 Q71 66 72 74 Q69 79 60 80.5 H10 Q0 79 -1 74 Z" fill="#3a2521"/>
<rect x="11" y="69" width="50" height="8.5" fill="#cb6a48"/><rect x="11" y="72.5" width="50" height="1.5" fill="#5a2e22"/><rect x="16" y="69" width="2" height="8.5" fill="#4a2a20"/><rect x="25" y="69" width="2" height="8.5" fill="#4a2a20"/><rect x="34" y="69" width="2" height="8.5" fill="#4a2a20"/><rect x="43" y="69" width="2" height="8.5" fill="#4a2a20"/><rect x="52" y="69" width="2" height="8.5" fill="#4a2a20"/>
<rect x="30" y="78" width="36" height="3" fill="#7d4e40"/>
<path d="M34 84 Q36 81 50 81 H64 Q74 84 75 90 Q72 94 64 95 H36 Z" fill="#3a2521"/><rect x="36" y="88" width="29" height="12" fill="#cf6c48"/><rect x="36" y="94" width="29" height="1.6" fill="#5a2e22"/><rect x="41" y="88" width="2" height="12" fill="#4a2a20"/><rect x="50" y="88" width="2" height="12" fill="#4a2a20"/><rect x="58" y="88" width="2" height="12" fill="#4a2a20"/>
</g>
<g filter="url(#b4s)"><path d="M-2 102 V88 Q2 78 14 77 Q24 74 32 80 Q40 86 38 94 L44 102 Z" fill="#3f8f3c"/><path d="M6 88 Q12 80 22 82 Q28 88 22 94 Q10 96 6 88 Z" fill="#5aa84e"/><path d="M-2 92 Q4 90 8 96 L8 102 H-2 Z" fill="#2f6e30"/></g>
<g filter="url(#b4)"><path d="M78 100 L80 92 L82 86 M86 100 L88 90 L90 94 M94 100 L90 96" stroke="#6f8274" stroke-width="1.2" fill="none"/><path d="M74 100 L84 97 L100 98 V100 Z" fill="#7c8f80"/></g></svg></span><span class="td n" role="cell" style="left:546px;top:45.7px">6</span><span class="td n" role="cell" style="left:626px;top:45.7px">6</span><span class="td n" role="cell" style="left:706px;top:45.7px">6</span><span class="td n" role="cell" style="left:786px;top:33.7px">2025-04-0<br>6 10:15:27</span><span class="td" role="cell" style="left:866px;top:46.2px">预约说明6</span><span class="td" role="cell" style="left:946px;top:46.2px">用户账号6</span><span class="td" role="cell" style="left:1026px;top:46.2px">用户姓名6</span><span class="td n" role="cell" style="left:1106px;top:33.7px">138238888<br>86</span><span class="td n" role="cell" style="left:1186px;top:33.7px">440300199<br>606060006</span><span class="td" role="cell" style="left:1266px;top:46.2px">未支付</span><button type="button" class="ob" style="left:1346px;top:39px;background:#4fc3f0">查看</button><button type="button" class="ob" style="left:1409px;top:39px;background:#4ea8cf">删除</button></div>
<div class="tr" role="row" style="top:544px;height:115px;background:#eefaff"><span class="cb" style="top:51px"></span><span class="td n" role="cell" style="left:56px;top:45.7px">5</span><span class="td n" role="cell" style="left:106px;top:33.7px">555555555<br>5</span><span class="td" role="cell" style="left:186px;top:46.2px">景点名称5</span><span class="td" role="cell" style="left:266px;top:46.2px">景点类型5</span><span class="thumb"><svg width="100" height="100" viewBox="0 0 100 100" style="display:block"><defs><linearGradient id="s5" x1="0" y1="0" x2="1" y2="0"><stop offset="0" stop-color="#b4d0ec"/><stop offset=".5" stop-color="#cadff0"/><stop offset="1" stop-color="#eaf2f8"/></linearGradient><filter id="b5" x="-10%" y="-10%" width="120%" height="120%"><feGaussianBlur stdDeviation=".6"/></filter></defs>
<rect width="100" height="100" fill="url(#s5)"/>
<g filter="url(#b5)"><path d="M52.5 -1 H95.5 L90 4.5 H63 Z" fill="#33262a"/><rect x="63" y="4" width="27" height="30" fill="#4a3a36"/><rect x="63" y="4" width="3.5" height="30" fill="#241a1c"/><rect x="77" y="0" width="3" height="34" fill="#6a4a40"/><rect x="86" y="4" width="4" height="30" fill="#2a2022"/>
<path d="M66 12 L74 11 L82 9 L84 13 L72 18 L66 18 Z" fill="#e9ecee"/><path d="M58 20 L66 17 L90 16 L96 20 V34 H58 Z" fill="#4e4238"/><rect x="60" y="18" width="34" height="2" fill="#8a8478"/>
<rect x="53.5" y="3.5" width="2.6" height="5.5" fill="#c9344a"/><rect x="97" y="0" width="2.4" height="5.5" fill="#c9344a"/></g></svg></span><span class="td n" role="cell" style="left:546px;top:45.7px">5</span><span class="td n" role="cell" style="left:626px;top:45.7px">5</span><span class="td n" role="cell" style="left:706px;top:45.7px">5</span><span class="td n" role="cell" style="left:786px;top:33.7px">2025-04-0<br>6 10:15:27</span><span class="td" role="cell" style="left:866px;top:46.2px">预约说明5</span><span class="td" role="cell" style="left:946px;top:46.2px">用户账号5</span><span class="td" role="cell" style="left:1026px;top:46.2px">用户姓名5</span><span class="td n" role="cell" style="left:1106px;top:33.7px">138238888<br>85</span><span class="td n" role="cell" style="left:1186px;top:33.7px">440300199<br>505050005</span><span class="td" role="cell" style="left:1266px;top:46.2px">未支付</span><button type="button" class="ob" style="left:1346px;top:39px;background:#4fc3f0">查看</button><button type="button" class="ob" style="left:1409px;top:39px;background:#4ea8cf">删除</button></div>
</div>
</main>
</div>
<div id="topl"></div><div id="topd"></div>
<div id="sb"><div class="t"></div><svg width="17" height="17" viewBox="0 0 17 17" style="position:absolute;left:0;top:0"><path d="M5 10.5 L8.5 7 L12 10.5 Z" fill="#a3a3a3"/></svg><svg width="17" height="17" viewBox="0 0 17 17" style="position:absolute;left:0;top:902px"><path d="M4.9 6 L8.5 10.1 L12.1 6 Z" fill="#505050"/></svg></div>
<svg width="19" height="25" viewBox="0 0 19 25" style="position:absolute;left:146.5px;top:683.5px"><path d="M6 2 C6 0.3 8.7 0.3 8.7 2 V6.6 C8.9 5.2 11.4 5.2 11.6 6.7 V7.3 C11.9 6 14.3 6.1 14.5 7.7 V8.5 C14.9 7.4 17.5 7.6 17.5 9.3 V16.8 C17.5 20.8 14.8 23.6 11.7 23.6 C8.8 23.6 7.2 22.2 5.6 20 L1.1 14.7 C0.3 13.5 1.9 12 3.1 13 L6 15.4 Z" fill="#fff" stroke="#0b1c24" stroke-width="1.3" stroke-linejoin="round"/><path d="M8.7 6.6 V10.8 M11.6 7.3 V10.8 M14.5 8.4 V10.8" stroke="#0b1c24" stroke-width="1.2" fill="none"/></svg></body></html>
